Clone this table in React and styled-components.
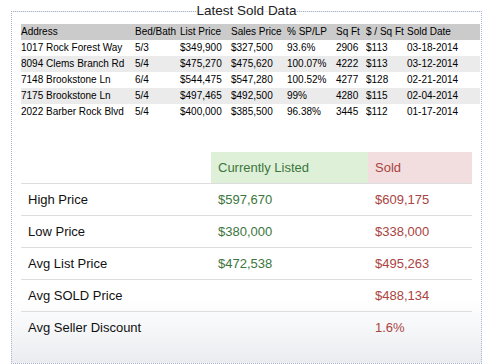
import React from 'react';
import styled, { createGlobalStyle } from 'styled-components';

const GlobalStyle = createGlobalStyle`
    html, body {
        margin: 0;
        padding: 0;
        background: #fff;
    }
    body {
        font-family: "Liberation Sans", Arial, sans-serif;
    }
`;

const Page = styled.div`
    padding: 3px 11px 0 11px;
    width: 492px;
    box-sizing: border-box;
`;

const Box = styled.fieldset`
    margin: 0;
    width: 471px;
    height: 361px;
    box-sizing: border-box;
    border: 1px dotted #a9b3cc;
    padding: 5px 9px 0 9px;
    min-width: 0;
    background: linear-gradient(to bottom, #fff 82%, #eaecf0 100%);
`;

const Title = styled.legend`
    margin: 0 auto;
    padding: 0 1px;
    font-size: 13.5px;
    line-height: 16px;
    color: #222;
`;

const SoldGrid = styled.div`
    width: 459px;
    font-size: 10px;
    color: #000;
`;

const SoldRow = styled.div`
    display: grid;
    grid-template-columns: 114px 45px 51px 56px 49px 30px 41px 73px;
    height: 16px;
    line-height: 16px;
    background: ${props => props.head ? "#cbcbcb" : props.shade ? "#ebebeb" : "transparent"};
    white-space: nowrap;
`;

const StatsGrid = styled.div`
    width: 451px;
    margin-top: 32px;
    font-size: 13px;
`;

const StatsRow = styled.div`
    display: grid;
    grid-template-columns: 190px 157px 104px;
    border-top: ${props => props.first ? "none" : "1px solid #dddddd"};
    height: ${props => props.first ? "31px" : "32px"};
    box-sizing: border-box;
`;

const Cell = styled.div`
    padding: 6px 7px;
    line-height: 19px;
    white-space: nowrap;
    color: ${props => props.tone === "green" ? "#3c763d" : props.tone === "red" ? "#a94442" : "#111"};
    background: ${props => props.bg || "transparent"};
`;

const sold = [
    ["1017 Rock Forest Way", "5/3", "$349,900", "$327,500", "93.6%", "2906", "$113", "03-18-2014"],
    ["8094 Clems Branch Rd", "5/4", "$475,270", "$475,620", "100.07%", "4222", "$113", "03-12-2014"],
    ["7148 Brookstone Ln", "6/4", "$544,475", "$547,280", "100.52%", "4277", "$128", "02-21-2014"],
    ["7175 Brookstone Ln", "5/4", "$497,465", "$492,500", "99%", "4280", "$115", "02-04-2014"],
    ["2022 Barber Rock Blvd", "5/4", "$400,000", "$385,500", "96.38%", "3445", "$112", "01-17-2014"],
];

const heads = ["Address", "Bed/Bath", "List Price", "Sales Price", "% SP/LP", "Sq Ft", "$ / Sq Ft", "Sold Date"];

const stats = [
    ["High Price", "$597,670", "$609,175"],
    ["Low Price", "$380,000", "$338,000"],
    ["Avg List Price", "$472,538", "$495,263"],
    ["Avg SOLD Price", "", "$488,134"],
    ["Avg Seller Discount", "", "1.6%"],
];

export default function App() {
    return (
        <Page>
            <GlobalStyle />
            <Box>
                <Title>Latest Sold Data</Title>
                <SoldGrid>
                    <SoldRow head>
                        {heads.map(h => <div key={h}>{h}</div>)}
                    </SoldRow>
                    {sold.map((row, i) => (
                        <SoldRow key={row[0]} shade={i % 2 === 1}>
                            {row.map((v, j) => <div key={j}>{v}</div>)}
                        </SoldRow>
                    ))}
                </SoldGrid>
                <StatsGrid>
                    <StatsRow first>
                        <Cell />
                        <Cell tone="green" bg="#dff0d8">Currently Listed</Cell>
                        <Cell tone="red" bg="#f2dede">Sold</Cell>
                    </StatsRow>
                    {stats.map(([label, listed, soldValue]) => (
                        <StatsRow key={label}>
                            <Cell>{label}</Cell>
                            <Cell tone="green">{listed}</Cell>
                            <Cell tone="red">{soldValue}</Cell>
                        </StatsRow>
                    ))}
                </StatsGrid>
            </Box>
        </Page>
    );
}
